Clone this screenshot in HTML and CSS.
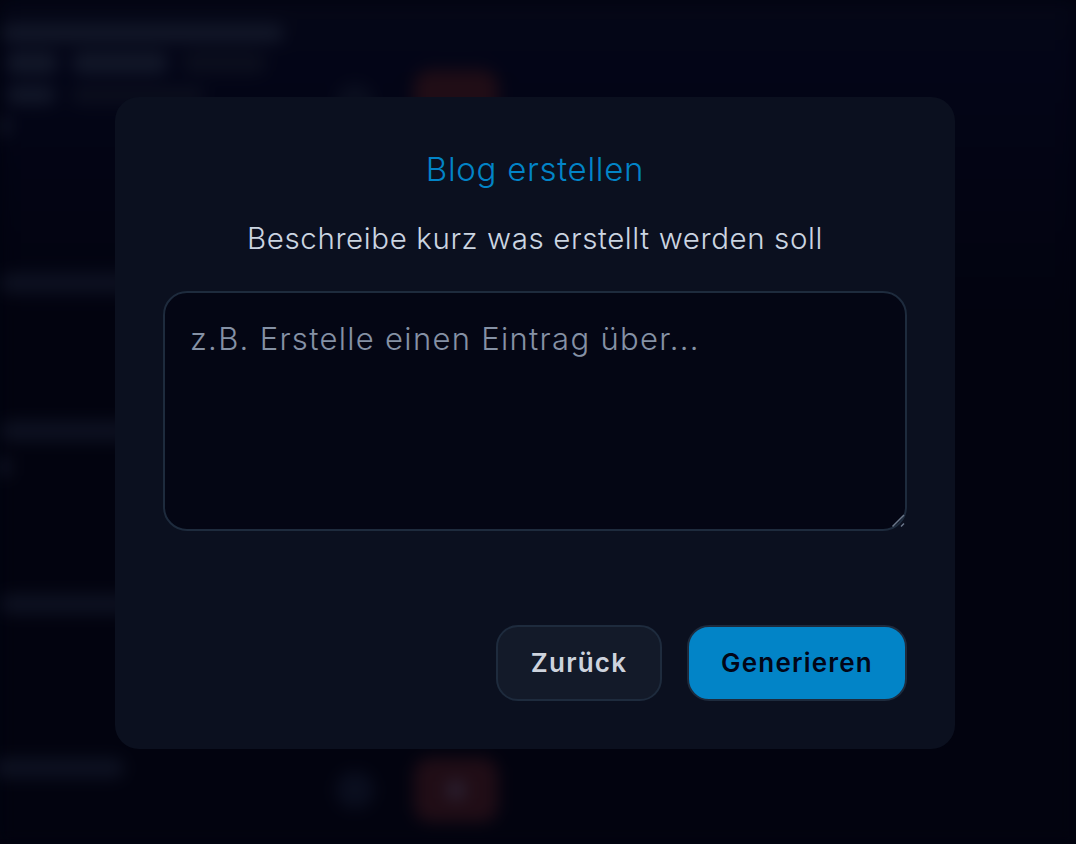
FILE: index.html
```html
<!DOCTYPE html>
<html lang="de">
<head>
<meta charset="utf-8">
<title>Blog erstellen</title>
<link rel="stylesheet" href="styles.css">
</head>
<body>
<div class="page" aria-hidden="true">
  <div class="entry entry-top">
    <div class="bar-row"><span class="bar w-title"></span></div>
    <div class="bar-row chips"><span class="bar w-a"></span><span class="bar w-b"></span><span class="bar w-c dim"></span></div>
    <div class="bar-row chips"><span class="bar w-d"></span><span class="bar w-e dim"></span></div>
    <div class="bar-row"><span class="bar w-stub"></span></div>
    <div class="actions actions-top"><span class="ghost"></span><span class="danger"></span></div>
  </div>
  <div class="bar-row row-1"><span class="bar w-long"></span></div>
  <div class="bar-row row-2"><span class="bar w-long"></span></div>
  <div class="bar-row row-3"><span class="bar w-stub"></span></div>
  <div class="bar-row row-4"><span class="bar w-long"></span></div>
  <div class="entry entry-bottom">
    <div class="bar-row"><span class="bar w-long"></span></div>
    <div class="actions actions-bottom"><span class="ghost"></span><span class="danger"><i class="dot"></i></span></div>
  </div>
</div>
<div class="overlay">
  <section class="modal">
    <h2 class="title">Blog erstellen</h2>
    <p class="lead">Beschreibe kurz was erstellt werden soll</p>
    <div class="prompt-wrap">
      <textarea class="prompt" placeholder="z.B. Erstelle einen Eintrag über..."></textarea>
      <svg class="grip" width="16" height="14" viewBox="0 0 16 14" aria-hidden="true"><path d="M14 1 2.500 12.500M14 9.500 11 12.500" fill="none" stroke="#6b778a" stroke-width="1.500"/></svg>
    </div>
    <div class="buttons">
      <button class="btn btn-back" type="button">Zurück</button>
      <button class="btn btn-go" type="button">Generieren</button>
    </div>
  </section>
</div>
</body>
</html>
```
FILE: styles.css
```css
* { box-sizing: border-box; }
html, body { margin: 0; height: 100%; }
body {
  background: #02030f;
  font-family: "Inter", "Liberation Sans", sans-serif;
  overflow: hidden;
  position: relative;
}
.page {
  height: 844px;
  filter: blur(8px);
  display: flex;
  flex-direction: column;
  background: linear-gradient(#050716 0, #030517 60px, #02030f 320px);
}
.entry { position: relative; }
.entry-top { padding-top: 24px; height: 150px; }
.entry-bottom { margin-top: 134px; }
.bar-row { display: flex; gap: 14px; padding-left: 6px; margin-bottom: 10px; }
.bar-row:first-child { padding-left: 0; }
.bar-row.chips { margin-bottom: 12px; }
.bar { display: block; height: 18px; border-radius: 9px; background: #121728; }
.bar.dim { background: #0b0e1d; }
.w-title { width: 284px; }
.w-a { width: 52px; height: 22px; }
.w-b { width: 96px; height: 22px; }
.w-c { width: 84px; height: 22px; }
.w-d { width: 50px; }
.w-e { width: 136px; }
.w-stub { width: 10px; height: 20px; margin-left: -6px; }
.w-long { width: 130px; height: 20px; margin-left: -6px; background: #0d1121; }
.row-1 { margin-top: 123px; }
.row-2 { margin-top: 118px; }
.row-3 { margin-top: 6px; }
.row-4 { margin-top: 107px; }
.actions {
  position: absolute;
  left: 336px;
  display: flex;
  align-items: center;
  gap: 40px;
}
.actions-top { top: 70px; }
.actions-bottom { top: 0; }
.ghost { width: 38px; height: 38px; border-radius: 50%; background: #0a0e1e; }
.danger {
  width: 84px;
  height: 64px;
  border-radius: 16px;
  background: #200d16;
  display: flex;
  align-items: center;
  justify-content: center;
}
.dot { display: block; width: 18px; height: 18px; border-radius: 4px; background: #2a2030; }
.overlay {
  position: absolute;
  inset: 0;
  display: flex;
  align-items: center;
  justify-content: center;
  padding: 2px 6px 0 0;
}
.modal {
  width: 840px;
  height: 652px;
  padding: 48px;
  background: #0b101f;
  border-radius: 24px;
  display: flex;
  flex-direction: column;
}
.title {
  margin: 0;
  height: 48px;
  line-height: 48px;
  text-align: center;
  font-size: 33px;
  font-weight: 300;
  letter-spacing: 0.700px;
  color: #0284c7;
}
.lead {
  margin: 24px 0 0;
  height: 43px;
  line-height: 43px;
  text-align: center;
  font-size: 29.500px;
  font-weight: 300;
  letter-spacing: 0.600px;
  color: #cbd5e1;
}
.prompt-wrap { position: relative; margin-top: 31px; height: 240px; }
.prompt {
  display: block;
  width: 744px;
  height: 240px;
  padding: 27px 25px;
  background: #040614;
  border: 2px solid #1e2b3d;
  border-radius: 24px;
  color: #cbd5e1;
  font: 300 31px/1.2 "Inter", "Liberation Sans", sans-serif;
  letter-spacing: 1.300px;
  outline: none;
  resize: none;
}
.prompt::placeholder { color: #8591a5; opacity: 1; }
.grip { position: absolute; right: 1px; bottom: 3px; }
.buttons {
  display: flex;
  justify-content: flex-end;
  gap: 25px;
  margin-top: 94px;
}
.btn {
  height: 76px;
  border: 2px solid #1e2b3d;
  border-radius: 22px;
  font: 600 26px/1 "Inter", "Liberation Sans", sans-serif;
  letter-spacing: 1.200px;
}
.btn-back { width: 166px; background: #131a29; color: #cdd3dd; }
.btn-go { width: 220px; background: #0284c7; color: #020617; }
```
